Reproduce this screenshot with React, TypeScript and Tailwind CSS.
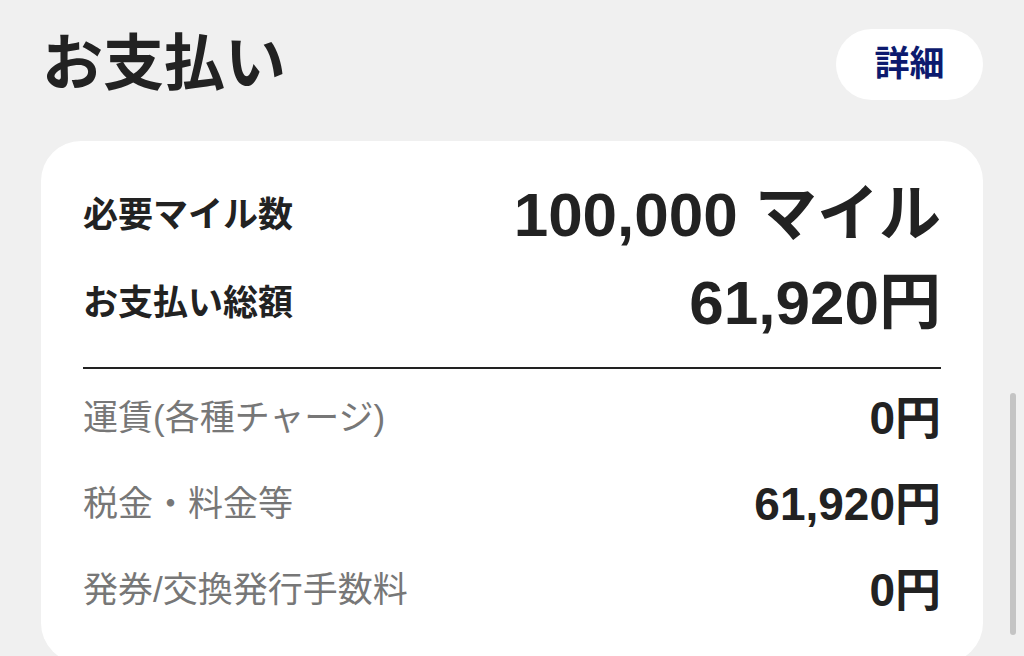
const font = { fontFamily: '"Liberation Sans", "Noto Sans CJK JP", sans-serif' };

const summary = [
  { label: "必要マイル数", value: "100,000 マイル" },
  { label: "お支払い総額", value: "61,920円" },
];

const breakdown = [
  { label: "運賃(各種チャージ)", value: "0円" },
  { label: "税金・料金等", value: "61,920円" },
  { label: "発券/交換発行手数料", value: "0円" },
];

export default function App() {
  return (
    <div
      className="relative h-[656px] w-full overflow-hidden bg-[#f0f0f0] text-[#222]"
      style={font}
    >
      <div className="px-[41px]">
        <div className="flex items-center justify-between pt-[29px]">
          <h1 className="ml-[1px] text-[61px] font-bold leading-none">お支払い</h1>
          <button className="flex h-[71px] w-[147px] items-center justify-center rounded-full bg-white text-[35px] font-bold text-[#0c1a6e]">
            詳細
          </button>
        </div>

        <div className="mt-[41px] rounded-[40px] bg-white px-[42px] pt-[30px] pb-[30px]">
          {summary.map((row) => (
            <div key={row.label} className="flex h-[88px] items-center justify-between">
              <span className="text-[35px] font-bold">{row.label}</span>
              <span className="text-[62px] font-bold leading-none">{row.value}</span>
            </div>
          ))}
          <div className="mt-[20px] h-[2px] bg-[#222]" />
          <div className="pt-[6px]">
            {breakdown.map((row) => (
              <div key={row.label} className="flex h-[86px] items-center justify-between">
                <span className="text-[35px] text-[#777]">{row.label}</span>
                <span className="text-[46px] font-bold leading-none">{row.value}</span>
              </div>
            ))}
          </div>
        </div>
      </div>

      <div className="absolute top-[393px] right-[8px] h-[242px] w-[6px] rounded-full bg-[#c4c4c4]" />
    </div>
  );
}
